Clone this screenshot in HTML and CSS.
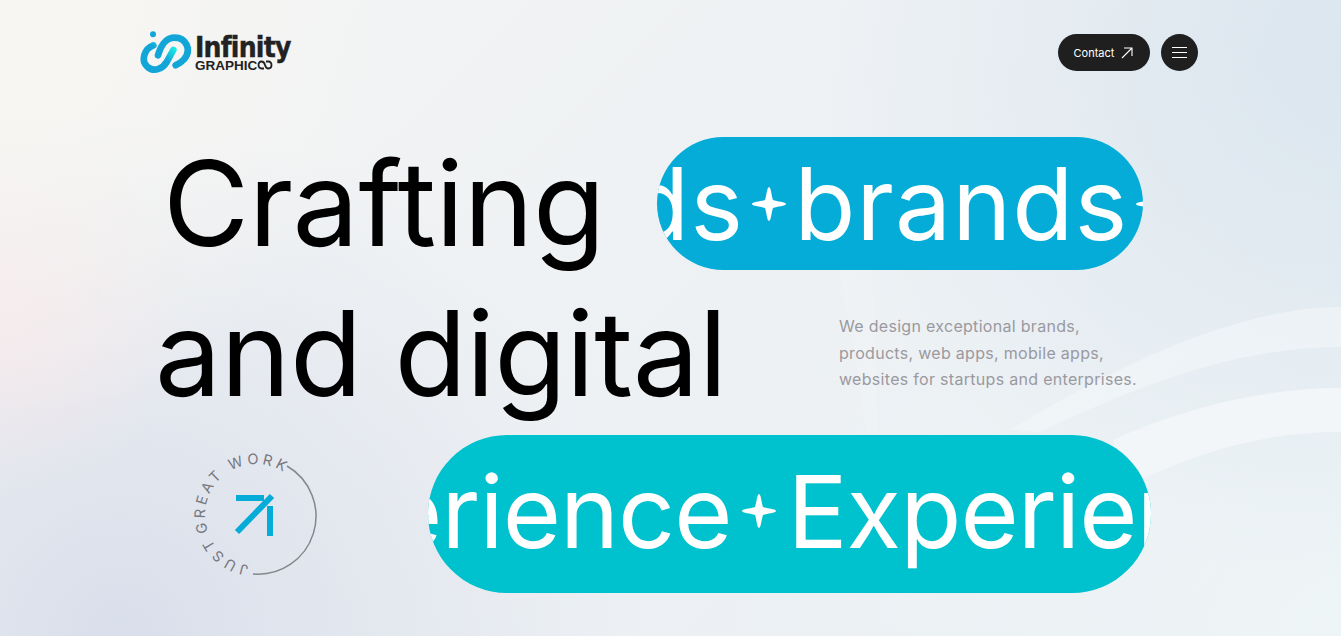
FILE: index.html
```html
<!DOCTYPE html>
<html>
<head>
  <meta charset="UTF-8">
  <title>Infinity Graphics</title>
  <link rel="stylesheet" href="styles.css">
</head>
<body>
  <svg class="waves" viewBox="0 0 1341 636" aria-hidden="true">
    <path class="wave-a" d="M1113 440 C1190 405 1270 388 1341 388 L1341 432 C1270 432 1210 448 1147 477 L1120 490 Z"/>
    <path class="wave-b" d="M1010 430 C1100 375 1230 307 1341 307 L1341 347 C1230 347 1130 390 1040 432 Z"/>
    <path class="wave-c" d="M838 270 L872 270 L878 432 L866 432 C860 380 850 320 838 270 Z"/>
  </svg>

  <div class="page">
    <header class="nav">
      <a class="logo" href="#">
        <svg class="logo-mark" viewBox="12 12 168 138">
          <defs>
            <linearGradient id="swoosh" gradientUnits="userSpaceOnUse" x1="60" y1="130" x2="120" y2="70">
              <stop offset="0" stop-color="#12a6d8"/>
              <stop offset="0.55" stop-color="#12a6d8"/>
              <stop offset="1" stop-color="#1be6e2"/>
            </linearGradient>
          </defs>
          <circle cx="57" cy="25" r="9" fill="#12a6d8"/>
          <path d="M72 88 C80 62 92 35 122 35 C155 35 175 70 150 100 C143 108 135 113 125 118" fill="none" stroke="#12a6d8" stroke-width="20" stroke-linecap="round"/>
          <path d="M58 58 C30 68 20 105 40 122 C62 142 88 125 98 108 L118 72" fill="none" stroke="url(#swoosh)" stroke-width="20" stroke-linecap="round"/>
        </svg>
        <span class="logo-text">
          <span class="logo-name">Infinity</span>
          <span class="logo-sub">GRAPHIC<svg class="logo-link" viewBox="0 0 16 10"><path d="M7 8.500 H4.500 C0.500 8.500 0.500 1.500 4.500 1.500 C6.500 1.500 7.500 3 8 5 C8.500 7 9.500 8.500 11.500 8.500 C15.500 8.500 15.500 1.500 11.500 1.500 H9" fill="none" stroke="#222" stroke-width="1.800"/></svg></span>
        </span>
      </a>
      <div class="nav-actions">
        <a class="btn-contact" href="#">Contact
          <svg class="btn-arrow" viewBox="0 0 12 12"><path d="M1 11 L11 1 M3 1 H11 V9" fill="none" stroke="#fff" stroke-width="1.100"/></svg>
        </a>
        <button class="btn-menu" aria-label="Menu"><span></span><span></span><span></span></button>
      </div>
    </header>

    <section class="hero">
      <div class="row row-one">
        <h1 class="big crafting">Crafting</h1>
        <div class="pill pill-blue">
          <div class="track track-blue">
            <span>brands</span>
            <svg class="star" viewBox="0 0 34 34"><path d="M17 0 C19 0 19.500 9 21 13 C25 14.500 34 15 34 17 C34 19 25 19.500 21 21 C19.500 25 19 34 17 34 C15 34 14.500 25 13 21 C9 19.500 0 19 0 17 C0 15 9 14.500 13 13 C14.500 9 15 0 17 0 Z" fill="#fff"/></svg>
            <span>brands</span>
            <svg class="star" viewBox="0 0 34 34"><path d="M17 0 C19 0 19.500 9 21 13 C25 14.500 34 15 34 17 C34 19 25 19.500 21 21 C19.500 25 19 34 17 34 C15 34 14.500 25 13 21 C9 19.500 0 19 0 17 C0 15 9 14.500 13 13 C14.500 9 15 0 17 0 Z" fill="#fff"/></svg>
          </div>
        </div>
      </div>

      <div class="row row-two">
        <div class="big digital">and digital</div>
        <p class="intro">We design exceptional brands,<br>products, web apps, mobile apps,<br>websites for startups and enterprises.</p>
      </div>

      <div class="row row-three">
        <svg class="badge" viewBox="0 0 130 130">
          <defs>
            <path id="ring" d="M66 117 A51 51 0 1 1 66.100 117"/>
          </defs>
          <path class="badge-arc" d="M97 17 A58 58 0 0 1 63 125"/>
          <text class="badge-text"><textPath href="#ring" startOffset="7">JUST</textPath></text>
          <text class="badge-text"><textPath href="#ring" startOffset="62">GREAT WORK</textPath></text>
          <path class="badge-arrow" d="M46 49 H74 M80 57 V87 M82 47 L47 83"/>
        </svg>
        <div class="pill pill-teal">
          <div class="track track-teal">
            <span>Experience</span>
            <svg class="star" viewBox="0 0 34 34"><path d="M17 0 C19 0 19.500 9 21 13 C25 14.500 34 15 34 17 C34 19 25 19.500 21 21 C19.500 25 19 34 17 34 C15 34 14.500 25 13 21 C9 19.500 0 19 0 17 C0 15 9 14.500 13 13 C14.500 9 15 0 17 0 Z" fill="#fff"/></svg>
            <span>Experience</span>
          </div>
        </div>
      </div>
    </section>
  </div>
</body>
</html>
```

FILE: styles.css
```css
* {
  box-sizing: border-box;
}

html,
body {
  height: 100%;
}

body {
  margin: 0;
  overflow: hidden;
  font-family: Inter, "Liberation Sans", sans-serif;
  color: #000;
  background-color: #e9eef3;
  background-image:
    radial-gradient(circle at 0 0, #f8f6f2 0, rgba(248, 246, 242, 0) 420px),
    radial-gradient(circle at 0 310px, rgba(248, 232, 234, 0.8) 0, rgba(248, 232, 234, 0) 190px),
    radial-gradient(circle at 1341px 60px, #dbe6ef 0, rgba(219, 230, 239, 0) 520px),
    radial-gradient(circle at 120px 636px, #d9dfeb 0, rgba(217, 223, 235, 0) 520px),
    radial-gradient(circle at 1341px 636px, #eef5f6 0, rgba(238, 245, 246, 0) 640px),
    linear-gradient(135deg, #f3f4f4, #e9eef3);
}

.waves {
  position: absolute;
  top: 0;
  left: 0;
  width: 1341px;
  height: 636px;
}

.wave-a {
  fill: #f2f6f8;
}

.wave-b {
  fill: rgba(244, 247, 249, 0.55);
}

.wave-c {
  fill: rgba(244, 247, 249, 0.35);
}

.page {
  position: relative;
  width: 1060px;
  margin-left: 138px;
}

.nav {
  display: flex;
  justify-content: space-between;
  align-items: center;
  height: 105px;
}

.logo {
  display: flex;
  align-items: center;
  gap: 1px;
  color: #222;
  text-decoration: none;
}

.logo-mark {
  width: 56px;
  height: 46px;
}

.logo-text {
  display: flex;
  flex-direction: column;
}

.logo-name {
  font-family: "DejaVu Sans Condensed", "DejaVu Sans", sans-serif;
  font-size: 28px;
  font-stretch: condensed;
  font-weight: 700;
  letter-spacing: -0.800px;
  line-height: 27px;
  -webkit-text-stroke: 0.400px #222;
}

.logo-sub {
  display: flex;
  align-items: center;
  margin-top: -2px;
  font-family: "Liberation Sans", sans-serif;
  font-size: 13.500px;
  font-weight: 700;
  line-height: 13px;
}

.logo-link {
  width: 16px;
  height: 10px;
}

.nav-actions {
  display: flex;
  align-items: center;
  gap: 11px;
}

.btn-contact {
  display: flex;
  align-items: center;
  justify-content: center;
  gap: 7px;
  width: 92px;
  height: 37px;
  padding-right: 1px;
  border-radius: 19px;
  background-color: #1f1f1f;
  color: #fff;
  font-size: 11px;
  font-weight: 400;
  text-decoration: none;
}

.btn-arrow {
  width: 12px;
  height: 12px;
}

.btn-menu {
  display: flex;
  flex-direction: column;
  align-items: center;
  justify-content: center;
  gap: 3.500px;
  width: 37px;
  height: 37px;
  padding: 0;
  border: none;
  border-radius: 50%;
  background-color: #1f1f1f;
}

.btn-menu span {
  display: block;
  width: 15px;
  height: 1.500px;
  background-color: #fff;
}

.hero {
  display: flex;
  flex-direction: column;
  margin-top: 32px;
}

.row {
  display: flex;
  align-items: flex-start;
}

.big {
  margin: 0;
  font-size: 118px;
  font-weight: 400;
  letter-spacing: -0.500px;
  line-height: 133px;
  white-space: nowrap;
}

.row-one {
  height: 133px;
}

.crafting {
  margin-left: 25px;
}

.pill {
  flex-shrink: 0;
  overflow: hidden;
  border-radius: 100px;
  color: #fff;
}

.track {
  display: flex;
  align-items: center;
  white-space: nowrap;
}

.star {
  flex-shrink: 0;
  width: 34px;
  height: 34px;
}

.pill-blue {
  width: 486px;
  height: 133px;
  margin-left: auto;
  margin-right: 55px;
  background-color: #05acd8;
}

.track-blue {
  height: 133px;
  margin-left: -247px;
  gap: 8px;
  font-size: 100px;
  letter-spacing: 1px;
}

.row-two {
  justify-content: space-between;
  height: 165px;
}

.digital {
  margin-top: 17px;
  margin-left: 17px;
}

.intro {
  width: 359px;
  margin: 43px 0 0;
  color: #9b999f;
  font-size: 16px;
  letter-spacing: 0.300px;
  line-height: 26.500px;
}

.row-three {
  align-items: center;
  height: 158px;
}

.badge {
  flex-shrink: 0;
  width: 130px;
  height: 130px;
  margin-left: 52px;
}

.badge-arc {
  fill: none;
  stroke: #86868c;
  stroke-width: 1.500;
}

.badge-text {
  fill: #77777d;
  font-size: 14.500px;
  letter-spacing: 3.400px;
}

.badge-arrow {
  fill: none;
  stroke: #05acd8;
  stroke-width: 6;
}

.pill-teal {
  width: 723px;
  height: 158px;
  margin-left: 108px;
  background-color: #00c1ce;
}

.track-teal {
  height: 158px;
  margin-left: -217px;
  gap: 11px;
  padding-bottom: 6px;
  font-size: 100px;
  letter-spacing: -1px;
}
```
